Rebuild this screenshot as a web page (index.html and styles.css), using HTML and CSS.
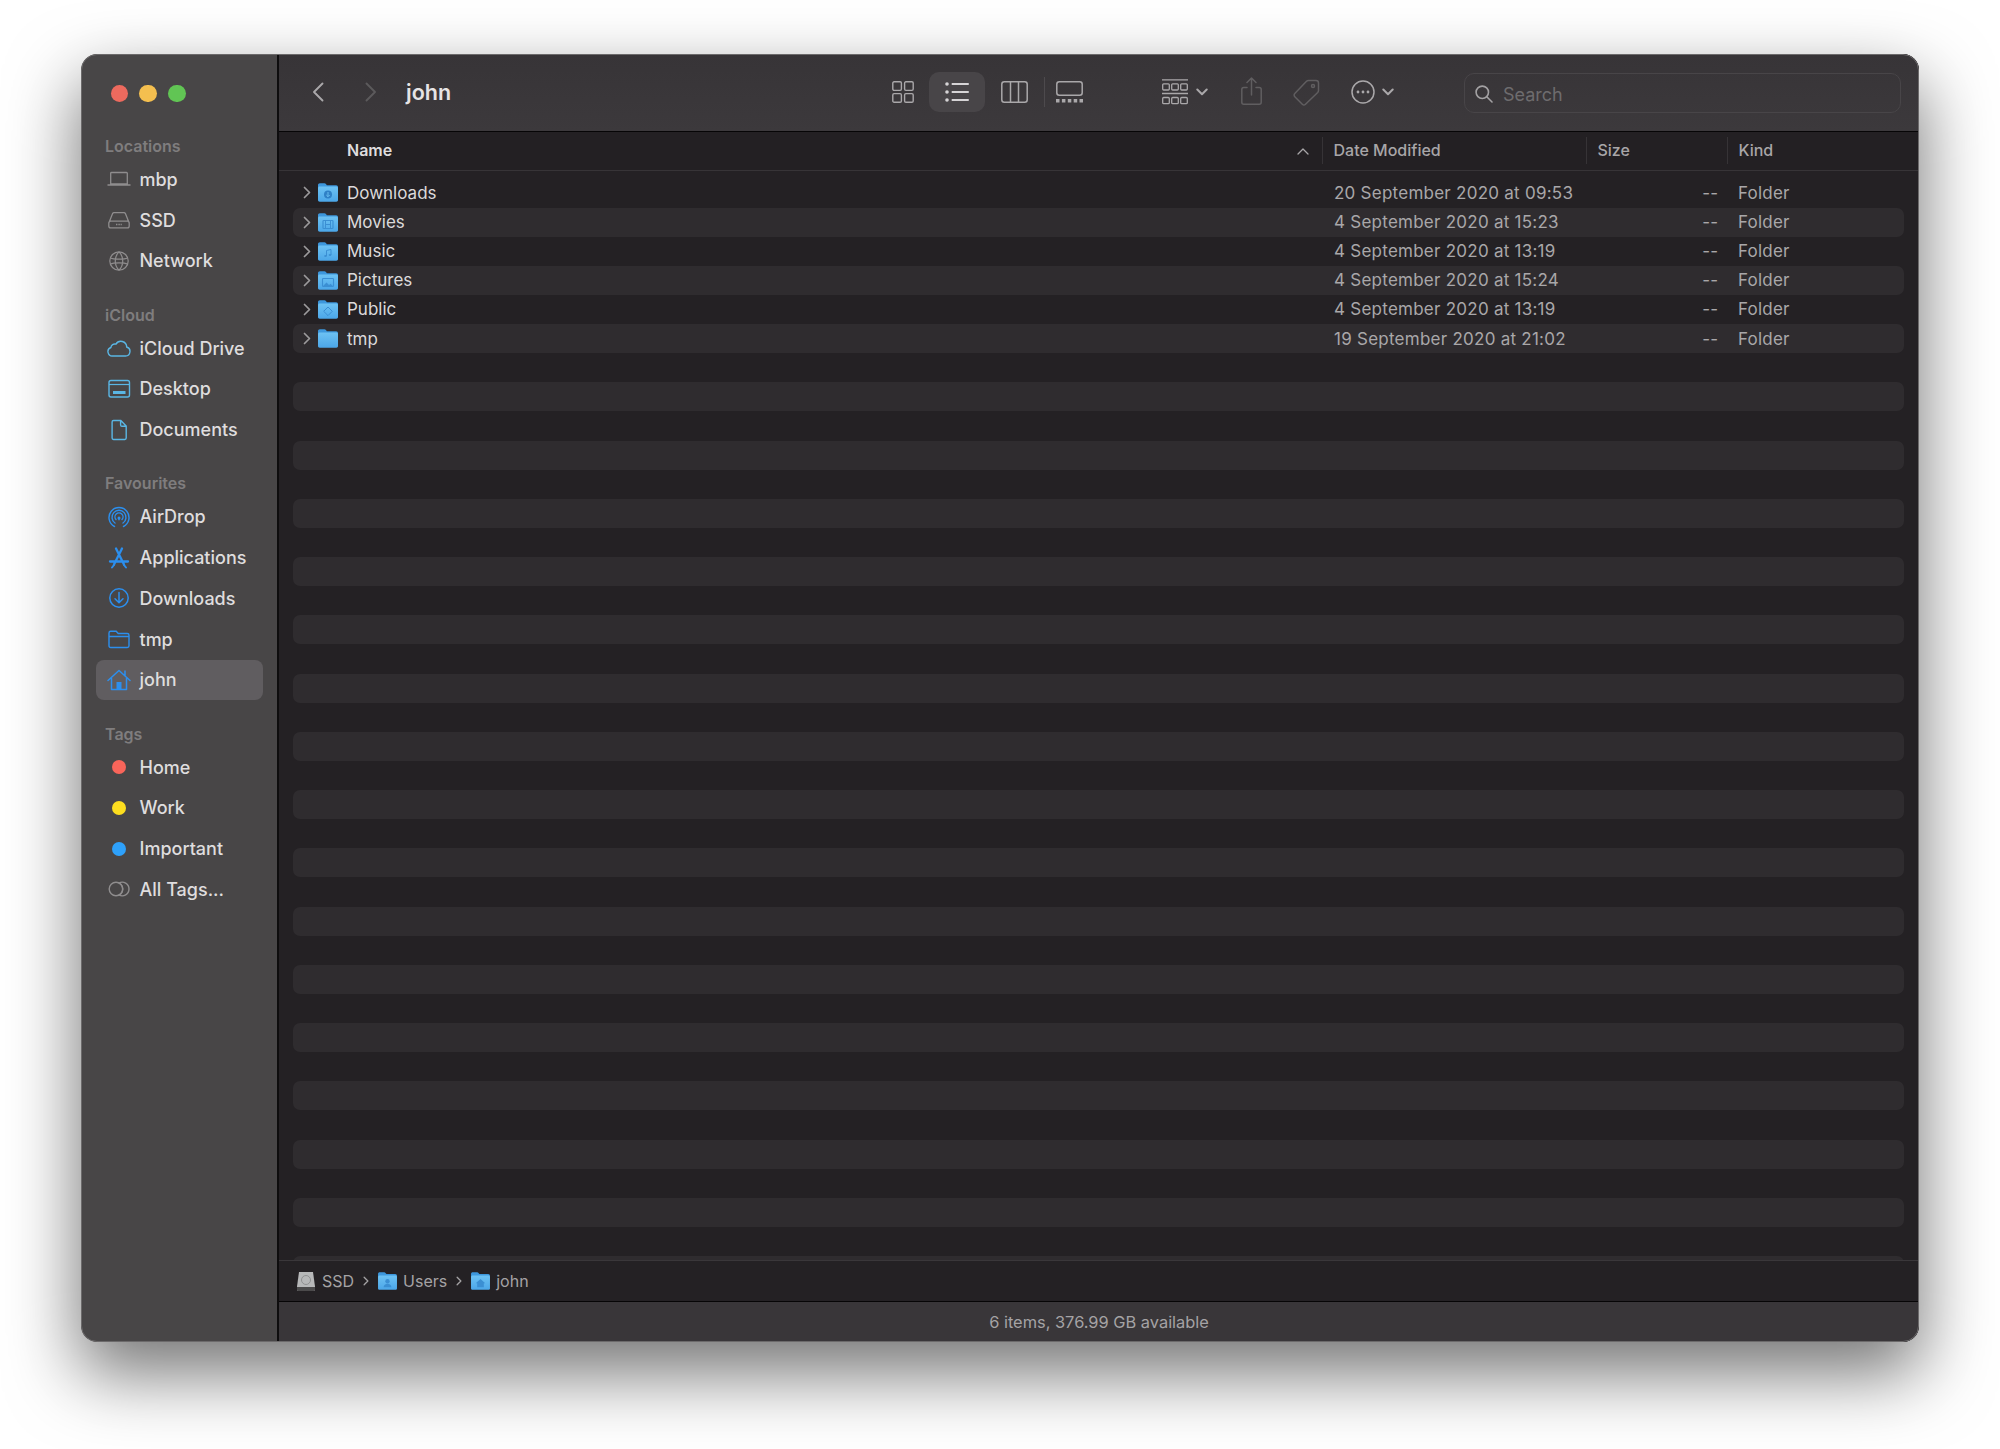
FILE: index.html
```html
<!DOCTYPE html>
<html lang="en">
<head>
<meta charset="utf-8">
<title>john</title>
<link rel="stylesheet" href="styles.css">
</head>
<body>
<svg class="defs" aria-hidden="true">
  <defs>
    <linearGradient id="fg" x1="0" y1="0" x2="0" y2="1"><stop offset="0" stop-color="#6dc2f3"/><stop offset="1" stop-color="#4ba6e8"/></linearGradient>
    <symbol id="folder" viewBox="0 0 20 19"><path d="M0 2.2C0 1 .8.3 1.8.3h4.6c.8 0 1.2.3 1.7.9l.8 1h9.3c1 0 1.8.8 1.8 1.8v3H0z" fill="#3d97dc"/><path d="M0 5.2c0-1 .7-1.6 1.7-1.6h16.6c1 0 1.7.7 1.7 1.6v11.9c0 1-.7 1.7-1.7 1.7H1.7C.7 18.8 0 18.1 0 17.1z" fill="url(#fg)"/></symbol>
    <symbol id="chev-r" viewBox="0 0 8 13"><path d="M1.5 1.5 6.5 6.5 1.5 11.5" fill="none" stroke="currentColor" stroke-width="1.7" stroke-linecap="round" stroke-linejoin="round"/></symbol>
    <symbol id="chev-d" viewBox="0 0 12 8"><path d="M1.3 1.5 6 6.3 10.7 1.5" fill="none" stroke="currentColor" stroke-width="2" stroke-linecap="round" stroke-linejoin="round"/></symbol>
  </defs>
</svg>
<div class="window">
  <aside class="sidebar">
    <div class="lights"><span class="light red"></span><span class="light amber"></span><span class="light green"></span></div>

    <div class="label">Locations</div>
    <div class="item"><svg class="ic grey" viewBox="0 0 24 24"><path d="M4.5 5.5h15a.8.8 0 0 1 .8.8V17H3.700V6.300a.8.8 0 0 1 .8-.8zM0.500 18h23" fill="none" stroke="currentColor" stroke-width="1.300"/></svg>mbp</div>
    <div class="item"><svg class="ic grey" viewBox="0 0 24 24"><path d="M2 14.500 5.600 5.600c.3-.6.8-.9 1.400-.9h10c.6 0 1.100.3 1.400.9l3.600 8.900M3.700 13.200h16.600a1.900 1.900 0 0 1 1.900 1.900v2.800a1.900 1.900 0 0 1-1.900 1.900H3.700a1.900 1.900 0 0 1-1.900-1.900v-2.800a1.900 1.900 0 0 1 1.900-1.900z" fill="none" stroke="currentColor" stroke-width="1.300"/><path d="M9 16.500h6" stroke="currentColor" stroke-width="1.600" stroke-dasharray="1 .6"/></svg>SSD</div>
    <div class="item"><svg class="ic grey" viewBox="0 0 24 24"><g fill="none" stroke="currentColor" stroke-width="1.200"><circle cx="12" cy="12" r="9.200"/><path d="M3.500 9c3 1.600 14 1.600 17 0M3.500 15c3-1.600 14-1.600 17 0M12 2.800c-5 5-5 13.400 0 18.400M12 2.800c5 5 5 13.400 0 18.400"/></g></svg>Network</div>

    <div class="label next">iCloud</div>
    <div class="item"><svg class="ic sky" viewBox="0 0 24 24"><path d="M6 20h12.500a4.600 4.600 0 0 0 1.200-9 5.800 5.800 0 0 0-10.800-2.800 3.800 3.800 0 0 0-5 3.300A4.400 4.400 0 0 0 6 20z" fill="none" stroke="currentColor" stroke-width="1.400"/></svg>iCloud Drive</div>
    <div class="item"><svg class="ic sky" viewBox="0 0 24 24"><rect x="2" y="3.500" width="20.500" height="16.500" rx="2" fill="none" stroke="currentColor" stroke-width="1.400"/><path d="M2 7.500h20.500" stroke="currentColor" stroke-width="1.200"/><rect x="6" y="14" width="12.500" height="3" fill="currentColor"/></svg>Desktop</div>
    <div class="item"><svg class="ic sky" viewBox="0 0 24 24"><path d="M6.500 2.500h7.300l5.400 5.600v12c0 .8-.6 1.400-1.400 1.400H6.500c-.8 0-1.400-.6-1.400-1.400V3.900c0-.8.6-1.400 1.400-1.400zM13.600 2.700v4.200c0 .8.500 1.300 1.300 1.300h4.100" fill="none" stroke="currentColor" stroke-width="1.400"/></svg>Documents</div>

    <div class="label next">Favourites</div>
    <div class="item"><svg class="ic blue" viewBox="0 0 24 24"><g fill="none" stroke="currentColor" stroke-width="1.400" stroke-linecap="round"><path d="M7.500 21.500a10 10 0 1 1 9 0"/><path d="M8 18a7 7 0 1 1 8 0"/><path d="M9 14.500a4 4 0 1 1 6 0"/></g><path d="M12 11.500a1.500 1.500 0 0 1 1.300 2.200l-1.300 2-1.300-2a1.500 1.500 0 0 1 1.300-2.200z" fill="currentColor"/></svg>AirDrop</div>
    <div class="item"><svg class="ic blue" viewBox="0 0 24 24"><g fill="none" stroke="currentColor" stroke-width="2.300" stroke-linecap="round"><path d="M9 2.500 17 18.500M15 2.500 7 18.500M3 15.500h18"/></g><path d="M5 21.500l2-2.500M19 21.500l-2-2.500" fill="none" stroke="currentColor" stroke-width="2" stroke-linecap="round"/></svg>Applications</div>
    <div class="item"><svg class="ic blue" viewBox="0 0 24 24"><g fill="none" stroke="currentColor" stroke-width="1.500" stroke-linecap="round" stroke-linejoin="round"><circle cx="12" cy="12" r="9.200"/><path d="M12 6.500v10M8 12.800l4 4 4-4"/></g></svg>Downloads</div>
    <div class="item"><svg class="ic blue" viewBox="0 0 24 24"><path d="M2 6c0-1 .7-1.700 1.700-1.700h5.500l2 2.200h9.100c1 0 1.700.7 1.700 1.700v10.600c0 1-.7 1.700-1.700 1.700H3.700c-1 0-1.700-.7-1.700-1.700zM2 9.500h20" fill="none" stroke="currentColor" stroke-width="1.400"/></svg>tmp</div>
    <div class="item current"><svg class="ic blue" viewBox="0 0 24 24"><path d="M1 12.500 12 2.500l11 10M18 3v4.700M4.500 10.500v11h15v-11" fill="none" stroke="currentColor" stroke-width="1.500" stroke-linejoin="round" stroke-linecap="round"/><rect x="9.500" y="14" width="5" height="7.500" fill="currentColor"/></svg>john</div>

    <div class="label next">Tags</div>
    <div class="item"><span class="dot d-red"></span>Home</div>
    <div class="item"><span class="dot d-yellow"></span>Work</div>
    <div class="item"><span class="dot d-blue"></span>Important</div>
    <div class="item"><svg class="ic grey" viewBox="0 0 24 24"><circle cx="9" cy="12" r="6.800" fill="none" stroke="currentColor" stroke-width="1.400"/><path d="M12 6a6.800 6.800 0 1 1 0 12a6.800 6.800 0 0 0 0-12z" fill="none" stroke="currentColor" stroke-width="1.400"/></svg>All Tags...</div>
  </aside>

  <main class="pane">
    <header class="toolbar">
      <div class="t-left">
        <svg class="t-back" viewBox="0 0 12 20"><path d="M10.500 1.500 2 10l8.500 8.500" fill="none" stroke="currentColor" stroke-width="1.900" stroke-linecap="round" stroke-linejoin="round"/></svg>
        <svg class="t-fwd" viewBox="0 0 12 20"><path d="M1.500 1.500 10 10l-8.500 8.500" fill="none" stroke="currentColor" stroke-width="1.900" stroke-linecap="round" stroke-linejoin="round"/></svg>
        <span class="t-title">john</span>
      </div>
      <svg class="t-grid" viewBox="0 0 22 22"><g fill="none" stroke="currentColor" stroke-width="1.400"><rect x=".8" y=".8" width="8.600" height="8.600" rx="1.300"/><rect x="12.600" y=".8" width="8.600" height="8.600" rx="1.300"/><rect x=".8" y="12.600" width="8.600" height="8.600" rx="1.300"/><rect x="12.600" y="12.600" width="8.600" height="8.600" rx="1.300"/></g></svg>
      <span class="t-active"><svg class="t-list" viewBox="0 0 24 20"><g fill="currentColor"><circle cx="2" cy="2" r="1.800"/><circle cx="2" cy="10" r="1.800"/><circle cx="2" cy="18" r="1.800"/><rect x="6.500" y="1.100" width="17.500" height="1.800" rx=".9"/><rect x="6.500" y="9.100" width="17.500" height="1.800" rx=".9"/><rect x="6.500" y="17.100" width="17.500" height="1.800" rx=".9"/></g></svg></span>
      <svg class="t-cols" viewBox="0 0 27 22"><g fill="none" stroke="currentColor" stroke-width="1.500"><rect x=".8" y=".8" width="25.400" height="20.400" rx="2.500"/><path d="M9.500.8v20.400M17.500.8v20.400"/></g></svg>
      <span class="t-sep"></span>
      <svg class="t-gal" viewBox="0 0 27 22"><rect x=".8" y=".8" width="25.400" height="13.500" rx="2.500" fill="none" stroke="currentColor" stroke-width="1.500"/><g fill="currentColor"><rect x="0" y="18" width="3.500" height="3.500"/><rect x="5.900" y="18" width="3.500" height="3.500"/><rect x="11.800" y="18" width="3.500" height="3.500"/><rect x="17.700" y="18" width="3.500" height="3.500"/><rect x="23.500" y="18" width="3.500" height="3.500"/></g></svg>
      <svg class="t-group" viewBox="0 0 26 26"><g fill="none" stroke="currentColor" stroke-width="1.300"><path d="M0 .8h26M0 14.500h26"/><rect x=".7" y="4.800" width="6.600" height="6.200" rx="1"/><rect x="9.700" y="4.800" width="6.600" height="6.200" rx="1"/><rect x="18.700" y="4.800" width="6.600" height="6.200" rx="1"/><rect x=".7" y="18.500" width="6.600" height="6.200" rx="1"/><rect x="9.700" y="18.500" width="6.600" height="6.200" rx="1"/><rect x="18.700" y="18.500" width="6.600" height="6.200" rx="1"/></g></svg>
      <svg class="t-chev t-chev1"><use href="#chev-d"/></svg>
      <svg class="t-share" viewBox="0 0 21 28"><g fill="none" stroke="currentColor" stroke-width="1.500" stroke-linecap="round" stroke-linejoin="round"><path d="M6 10.500H2.800C1.600 10.500.8 11.300.8 12.500v12.700c0 1.200.8 2 2 2h15.400c1.200 0 2-.8 2-2V12.500c0-1.200-.8-2-2-2H15"/><path d="M10.500 18V1.200M6 5.500l4.500-4.500L15 5.500"/></g></svg>
      <svg class="t-tag" viewBox="0 0 27 27"><g fill="none" stroke="currentColor" stroke-width="1.500" stroke-linejoin="round"><path d="M15.500 1.500h7.500c1.400 0 2.500 1.100 2.500 2.500v7.500c0 .8-.3 1.400-.8 2L12.500 25.200c-.9.900-2.300.9-3.200 0l-7.500-7.500c-.9-.9-.9-2.300 0-3.200L13.500 2.300c.5-.5 1.200-.8 2-.8z"/><circle cx="20" cy="7" r="1.500"/></g></svg>
      <svg class="t-more" viewBox="0 0 24 24"><circle cx="12" cy="12" r="11" fill="none" stroke="currentColor" stroke-width="1.500"/><g fill="currentColor"><circle cx="7" cy="12" r="1.400"/><circle cx="12" cy="12" r="1.400"/><circle cx="17" cy="12" r="1.400"/></g></svg>
      <svg class="t-chev t-chev2"><use href="#chev-d"/></svg>
      <div class="search">
        <svg class="s-ic" viewBox="0 0 18 18"><g fill="none" stroke="currentColor" stroke-width="1.600" stroke-linecap="round"><circle cx="7.300" cy="7.300" r="6.200"/><path d="M11.800 11.800 17 17"/></g></svg>
        <span>Search</span>
      </div>
    </header>

    <div class="heads">
      <div class="h-cell h-name"><b>Name</b><svg class="sort" viewBox="0 0 12 7"><path d="M1 6 6 1l5 5" fill="none" stroke="currentColor" stroke-width="1.300" stroke-linecap="round" stroke-linejoin="round"/></svg></div>
      <div class="h-cell">Date Modified</div>
      <div class="h-cell">Size</div>
      <div class="h-cell">Kind</div>
    </div>

    <div class="list">
      <div class="row"><svg class="disc"><use href="#chev-r"/></svg><span class="fold"><svg class="f-base"><use href="#folder"/></svg><svg class="f-gl" viewBox="0 0 20 19"><circle cx="10" cy="11.500" r="4" fill="#2f80c6"/><path d="M10 9v4.500M8.300 12l1.700 1.700 1.700-1.700" stroke="#6dc2f3" stroke-width=".9" fill="none"/></svg></span><span class="n">Downloads</span><span class="d">20 September 2020 at 09:53</span><span class="s">--</span><span class="k">Folder</span></div>
      <div class="row"><svg class="disc"><use href="#chev-r"/></svg><span class="fold"><svg class="f-base"><use href="#folder"/></svg><svg class="f-gl" viewBox="0 0 20 19"><rect x="5" y="7.500" width="10" height="8" rx=".8" fill="none" stroke="#3b8fd3" stroke-width="1.200"/><path d="M7.500 7.500v8M12.500 7.500v8M7.500 11.500h5" stroke="#3b8fd3"/></svg></span><span class="n">Movies</span><span class="d">4 September 2020 at 15:23</span><span class="s">--</span><span class="k">Folder</span></div>
      <div class="row"><svg class="disc"><use href="#chev-r"/></svg><span class="fold"><svg class="f-base"><use href="#folder"/></svg><svg class="f-gl" viewBox="0 0 20 19"><path d="M8.500 14V8.500l4.500-1V13" fill="none" stroke="#3b8fd3" stroke-width="1"/><ellipse cx="7.500" cy="14" rx="1.300" ry="1" fill="#3b8fd3"/><ellipse cx="12" cy="13" rx="1.300" ry="1" fill="#3b8fd3"/></svg></span><span class="n">Music</span><span class="d">4 September 2020 at 13:19</span><span class="s">--</span><span class="k">Folder</span></div>
      <div class="row"><svg class="disc"><use href="#chev-r"/></svg><span class="fold"><svg class="f-base"><use href="#folder"/></svg><svg class="f-gl" viewBox="0 0 20 19"><rect x="4.500" y="7.500" width="11" height="8" rx=".8" fill="none" stroke="#3b8fd3" stroke-width="1.100"/><path d="M5 15l3.500-3.500 2.500 2.500 1.500-1.200 2.500 2.200z" fill="#3b8fd3"/></svg></span><span class="n">Pictures</span><span class="d">4 September 2020 at 15:24</span><span class="s">--</span><span class="k">Folder</span></div>
      <div class="row"><svg class="disc"><use href="#chev-r"/></svg><span class="fold"><svg class="f-base"><use href="#folder"/></svg><svg class="f-gl" viewBox="0 0 20 19"><path d="M10 7l4.300 4.300L10 15.600l-4.300-4.300z" fill="none" stroke="#3b8fd3"/></svg></span><span class="n">Public</span><span class="d">4 September 2020 at 13:19</span><span class="s">--</span><span class="k">Folder</span></div>
      <div class="row"><svg class="disc"><use href="#chev-r"/></svg><span class="fold"><svg class="f-base"><use href="#folder"/></svg></span><span class="n">tmp</span><span class="d">19 September 2020 at 21:02</span><span class="s">--</span><span class="k">Folder</span></div>
      <div class="row"></div><div class="row"></div><div class="row"></div><div class="row"></div><div class="row"></div>
      <div class="row"></div><div class="row"></div><div class="row"></div><div class="row"></div><div class="row"></div>
      <div class="row"></div><div class="row"></div><div class="row"></div><div class="row"></div><div class="row"></div>
      <div class="row"></div><div class="row"></div><div class="row"></div><div class="row"></div><div class="row"></div>
      <div class="row"></div><div class="row"></div><div class="row"></div><div class="row"></div><div class="row"></div>
      <div class="row"></div><div class="row"></div><div class="row"></div><div class="row"></div><div class="row"></div>
      <div class="row"></div><div class="row"></div>
    </div>

    <div class="pathbar">
      <svg class="p-disk" viewBox="0 0 18 19"><path d="M2 0h14l2 14.500v3c0 .8-.6 1.400-1.400 1.400H1.400C.6 18.900 0 18.300 0 17.500v-3z" fill="#b7b8b9"/><path d="M0 15h18v2.500c0 .8-.6 1.400-1.400 1.400H1.400C.6 18.900 0 18.300 0 17.500z" fill="#4b4a4b"/><circle cx="9" cy="8" r="4.500" fill="none" stroke="#8f9091"/></svg>
      <span>SSD</span>
      <svg class="p-chev"><use href="#chev-r"/></svg>
      <span class="fold p-fold"><svg class="f-base"><use href="#folder"/></svg><svg class="f-gl" viewBox="0 0 20 19"><circle cx="10" cy="9.800" r="2.300" fill="#3b8fd3"/><path d="M5.800 16c.6-2.600 2.300-3.500 4.200-3.500s3.600.9 4.200 3.500z" fill="#3b8fd3"/></svg></span>
      <span>Users</span>
      <svg class="p-chev"><use href="#chev-r"/></svg>
      <span class="fold p-fold"><svg class="f-base"><use href="#folder"/></svg><svg class="f-gl" viewBox="0 0 20 19"><path d="M10 7.500l5 4.500h-1.500v4h-7v-4H5z" fill="#3b8fd3"/></svg></span>
      <span>john</span>
    </div>
    <footer class="status">6 items, 376.99 GB available</footer>
  </main>
</div>
</body>
</html>
```

FILE: styles.css
```css
* { box-sizing: border-box; }
html, body { margin: 0; height: 100%; background: #fff; }
body { padding: 54px 0 0 81px; font-family: Inter, "Liberation Sans", sans-serif; overflow: hidden; }
.defs { position: absolute; width: 0; height: 0; }

.window {
  position: relative;
  width: 1838px;
  height: 1288px;
  display: flex;
  border-radius: 16px;
  overflow: hidden;
  box-shadow: 0 30px 70px 2px rgba(0,0,0,.54);
}
.window::after {
  content: "";
  position: absolute;
  inset: 0;
  border-radius: 16px;
  border: 1.5px solid #6c6a6b;
  pointer-events: none;
}

/* sidebar */
.sidebar { width: 198px; flex: none; background: #484647; border-right: 2px solid #0e0d0e; color: #dfddde; font-size: 18px; font-weight: 450; }
.lights { height: 79px; display: flex; gap: 11.300px; padding: 30.500px 0 0 29.500px; }
.light { width: 17.600px; height: 17.600px; border-radius: 50%; }
.red { background: #ed6a5e; }
.amber { background: #f4bf4f; }
.green { background: #61c554; }
.label { height: 26px; line-height: 26px; padding-left: 24px; font-size: 16px; font-weight: 600; color: #7f7d7e; }
.next { margin-top: 20.300px; }
.item { height: 40.800px; margin: 0 14px 0 15px; padding-left: 11px; display: flex; align-items: center; gap: 8.500px; border-radius: 8px; white-space: nowrap; }
.current { background: #605d60; }
.ic { width: 24px; height: 24px; flex: none; }
.grey { color: #8f8d8e; }
.sky { color: #5ab6e4; }
.blue { color: #2c8fee; }
.dot { width: 14px; height: 14px; margin: 0 5px; border-radius: 50%; flex: none; }
.d-red { background: #f9655a; }
.d-yellow { background: #fdde1f; }
.d-blue { background: #2ea1fb; }

/* main */
.pane { flex: 1; min-width: 0; display: flex; flex-direction: column; background: #242124; }
.toolbar { height: 78px; flex: none; display: flex; align-items: center; padding-bottom: 1px; background: linear-gradient(#373437, #3c393c); border-bottom: 1.500px solid #060506; color: #aaa8aa; }
.t-left { width: 613px; flex: none; display: flex; align-items: center; padding-left: 33px; }
.t-back { width: 12px; height: 20px; color: #aaa8aa; }
.t-fwd { width: 12px; height: 20px; margin-left: 41px; color: #5c5a5c; }
.t-title { margin-left: 29px; font-size: 21.500px; font-weight: 600; color: #e6e4e5; }
.t-grid { width: 22px; height: 22px; }
.t-active { width: 56px; height: 40px; margin-left: 15px; border-radius: 10px; background: #484548; display: flex; align-items: center; justify-content: center; color: #d6d4d6; }
.t-list { width: 24px; height: 20px; }
.t-cols { width: 27px; height: 22px; margin-left: 16px; }
.t-sep { width: 1px; height: 30px; margin-left: 16px; background: #4d4a4d; }
.t-gal { width: 27px; height: 22px; margin-left: 11px; }
.t-group { width: 26px; height: 26px; margin-left: 79px; }
.t-chev { width: 12px; height: 8px; }
.t-chev1 { margin-left: 8px; }
.t-share { width: 21px; height: 28px; margin: -2px 0 0 33px; color: #605e60; }
.t-tag { width: 27px; height: 27px; margin-left: 31px; color: #605e60; }
.t-more { width: 24px; height: 24px; margin-left: 31px; }
.t-chev2 { margin-left: 7px; }
.search { width: 437px; height: 40px; margin: 1px 0 0 70px; padding: 3px 0 0 10px; border: 1px solid #484548; border-radius: 10px; display: flex; align-items: center; gap: 10px; font-size: 18px; color: #6e6c6e; }
.s-ic { width: 18px; height: 18px; color: #a3a1a3; }

.heads { height: 39px; flex: none; display: grid; grid-template-columns: 1043px 264px 141px 1fr; align-items: center; padding-bottom: 2px; background: #232023; border-bottom: 1.500px solid #373437; font-size: 16px; font-weight: 450; color: #a8a6a8; }
.h-cell { height: 27px; padding-left: 10.500px; display: flex; align-items: center; border-left: 1px solid #363336; }
.h-name { border-left: 0; padding-left: 68px; justify-content: space-between; padding-right: 13px; }
.h-name b { font-weight: 600; color: #dfddde; }
.sort { width: 12px; height: 7px; color: #a8a6a8; margin-top: 2px; }

.list { flex: 1; min-height: 0; overflow: hidden; padding: 7.400px 15px 0 14px; font-size: 17px; color: #a9a7a9; }
.row { height: 29.130px; border-radius: 7px; display: grid; grid-template-columns: 25px 29px 987px 260px 124px 1fr; align-items: center; }
.row:nth-child(even) { background: #2f2c2f; }
.disc { width: 8px; height: 13px; margin-left: 9.500px; color: #9c9a9c; }
.fold { position: relative; display: block; width: 20px; height: 19px; }
.f-base, .f-gl { position: absolute; left: 0; top: 0; width: 20px; height: 19px; }
.n { color: #dcdadb; }
.d { letter-spacing: .25px; }
.s { text-align: right; }
.k { padding-left: 20px; letter-spacing: .2px; }

.pathbar { height: 42px; flex: none; display: flex; align-items: center; padding-left: 18px; background: #242124; border-top: 1px solid #3a373a; border-bottom: 1.500px solid #060506; font-size: 16px; color: #a5a3a5; }
.p-disk { width: 18px; height: 19px; margin-right: 7px; }
.p-chev { width: 6px; height: 10px; margin: 0 9.500px 0 8.500px; }
.p-fold { width: 19px; height: 18px; margin-right: 6px; }
.p-fold .f-base, .p-fold .f-gl { width: 19px; height: 18px; }
.status { height: 40px; flex: none; display: flex; align-items: center; justify-content: center; background: #393639; font-size: 16.400px; color: #a5a3a5; }
```
